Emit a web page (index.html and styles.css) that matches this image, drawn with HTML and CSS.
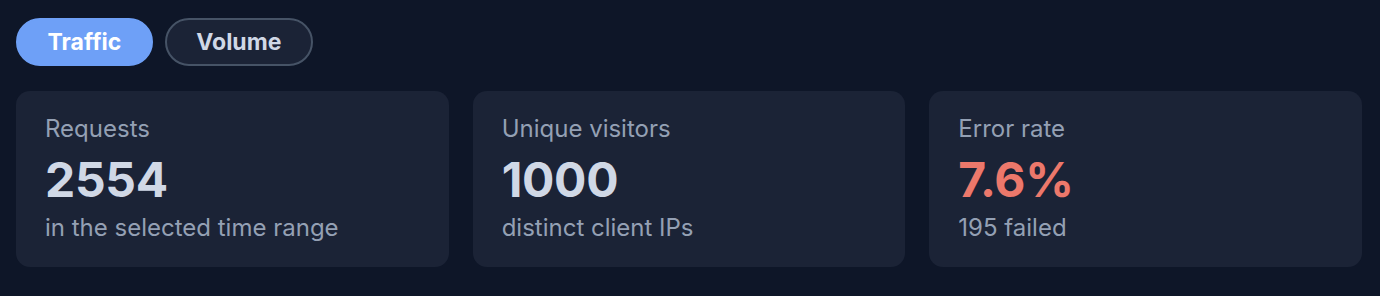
FILE: index.html
```html
<!DOCTYPE html>
<html>
    <head>
        <title>Traffic overview</title>
        <link rel="stylesheet" href="styles.css">
    </head>

    <body>
        <nav class="tabs">
            <button class="tab active">Traffic</button>
            <button class="tab">Volume</button>
        </nav>

        <section class="stats">
            <div class="statCard">
                <div class="statLabel">Requests</div>
                <div class="statValue">2554</div>
                <div class="statNote">in the selected time range</div>
            </div>
            <div class="statCard">
                <div class="statLabel">Unique visitors</div>
                <div class="statValue">1000</div>
                <div class="statNote">distinct client IPs</div>
            </div>
            <div class="statCard">
                <div class="statLabel">Error rate</div>
                <div class="statValue error">7.6%</div>
                <div class="statNote">195 failed</div>
            </div>
        </section>
    </body>
</html>
```

FILE: styles.css
```css
body {
    margin: 0;
    padding: 18px 18px 18px 16px;
    background-color: #0e1628;
    font-family: Inter, "Noto Sans", sans-serif;
}

.tabs {
    display: flex;
    gap: 12px;
}

.tab {
    height: 48px;
    padding: 0 29.5px;
    font-family: inherit;
    font-size: 23px;
    font-weight: 700;
    border-radius: 24px;
    border: 2px solid #465366;
    background-color: #1b2336;
    color: #d0d8e6;
    cursor: pointer;
}

.tab.active {
    background-color: #6ea0f7;
    border-color: #6ea0f7;
    color: #ffffff;
}

.stats {
    display: grid;
    grid-template-columns: repeat(3, 1fr);
    gap: 24px;
    margin-top: 25px;
}

.statCard {
    height: 176px;
    box-sizing: border-box;
    padding: 23px 29px;
    background-color: #1b2336;
    border-radius: 14px;
}

.statLabel {
    font-size: 24px;
    color: #94a0b4;
    line-height: 30px;
}

.statValue {
    margin-top: 10px;
    font-size: 48px;
    font-weight: 700;
    line-height: 52px;
    letter-spacing: -0.3px;
    color: #d0d8e6;
}

.statValue.error {
    color: #ec786b;
}

.statNote {
    margin-top: 7px;
    font-size: 24px;
    line-height: 30px;
    color: #94a0b4;
}
```
